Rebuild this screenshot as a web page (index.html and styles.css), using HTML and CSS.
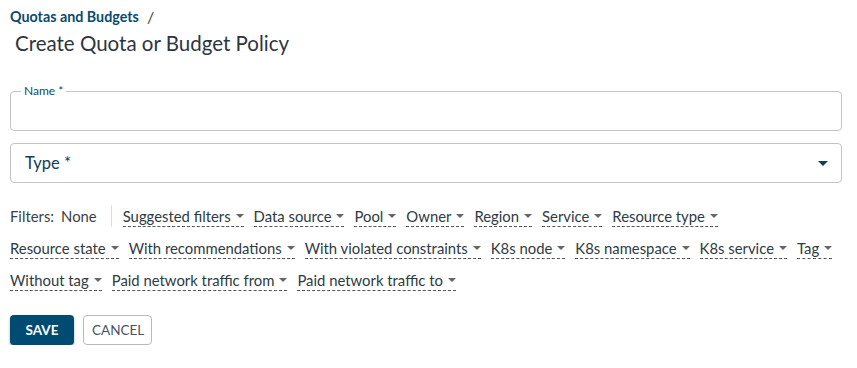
FILE: index.html
```html
<!DOCTYPE html>
<html>
<head>
<meta charset="utf-8">
<link rel="stylesheet" href="styles.css">
</head>
<body>
<div class="page">
  <div class="breadcrumbs"><a class="crumb">Quotas and Budgets</a><span class="sep">/</span></div>
  <h1 class="title">Create Quota or Budget Policy</h1>

  <fieldset class="field name-field">
    <legend>Name *</legend>
  </fieldset>

  <div class="field select-field">
    <span class="select-label">Type *</span>
    <svg class="select-arrow" width="10" height="5" viewBox="0 0 10 5"><path d="M0 0h10L5 5z" fill="#0b3f5f"/></svg>
  </div>

  <div class="filters">
    <div class="filters-head"><span>Filters:</span><span>None</span></div>
    <div class="divider"></div>
    <span class="filter">Suggested filters<i class="caret"></i></span>
    <span class="filter">Data source<i class="caret"></i></span>
    <span class="filter">Pool<i class="caret"></i></span>
    <span class="filter">Owner<i class="caret"></i></span>
    <span class="filter">Region<i class="caret"></i></span>
    <span class="filter">Service<i class="caret"></i></span>
    <span class="filter">Resource type<i class="caret"></i></span>
    <span class="row-break"></span>
    <span class="filter">Resource state<i class="caret"></i></span>
    <span class="filter">With recommendations<i class="caret"></i></span>
    <span class="filter">With violated constraints<i class="caret"></i></span>
    <span class="filter">K8s node<i class="caret"></i></span>
    <span class="filter">K8s namespace<i class="caret"></i></span>
    <span class="filter">K8s service<i class="caret"></i></span>
    <span class="filter">Tag<i class="caret"></i></span>
    <span class="row-break"></span>
    <span class="filter">Without tag<i class="caret"></i></span>
    <span class="filter">Paid network traffic from<i class="caret"></i></span>
    <span class="filter">Paid network traffic to<i class="caret"></i></span>
  </div>

  <div class="actions">
    <button class="btn btn-primary">SAVE</button>
    <button class="btn btn-outline">CANCEL</button>
  </div>
</div>
</body>
</html>
```

FILE: styles.css
```css
* { box-sizing: border-box; }
html, body { margin: 0; padding: 0; background: #fff; }
body { font-family: Lato, "Noto Sans", sans-serif; color: #333; }
.page { padding: 6px 15px 0 10px; }

.breadcrumbs { display: flex; align-items: center; gap: 8px; height: 20px; }
.crumb { font-size: 14.3px; font-weight: 700; color: #0b4a6e; }
.sep { font-size: 16px; color: #444; }

.title { margin: 3px 0 0 5px; font-size: 20.5px; font-weight: 400; color: #2d3540; height: 28px; line-height: 28px; }

.field { border: 1px solid #c4c4c4; border-radius: 4px; width: 100%; }
.name-field { margin: 28px 0 0 0; padding: 0 10px; height: 46px; min-width: 0; }
.name-field legend { font-size: 12px; color: #0b4a6e; padding: 0 3px; margin-left: 0; line-height: 12px; }

.select-field { margin-top: 12px; height: 40px; display: flex; align-items: center; justify-content: space-between; padding: 0 13px 0 14px; }
.select-label { font-size: 16.5px; color: #0f3d5a; }

.filters { margin-top: 17px; display: flex; flex-wrap: wrap; align-items: center; column-gap: 10px; font-size: 14.85px; }
.filters > * { margin: 5px 0; }
.filters > .row-break { flex-basis: 100%; height: 0; margin: 0; }
.filters-head { display: flex; gap: 7px; color: #3a3f45; height: 22px; align-items: center; margin-right: 4px; }
.divider { width: 1px; height: 22px; background: #ddd; margin-right: 1px; }
.filter { display: inline-flex; align-items: center; height: 22px; border-bottom: 1px dashed #555; color: #2e3a45; white-space: nowrap; }
.caret { display: inline-block; width: 0; height: 0; border-left: 4px solid transparent; border-right: 4px solid transparent; border-top: 4px solid #666; margin-left: 5px; }

.actions { margin-top: 19px; display: flex; gap: 9px; }
.btn { font-family: inherit; font-size: 13.5px; height: 30px; border-radius: 4px; padding: 0 8px; cursor: pointer; }
.btn-primary { background: #004b71; color: #fff; border: none; font-weight: 700; width: 64px; box-shadow: 0 2px 3px rgba(0,0,0,0.3); }
.btn-outline { background: #fff; color: #4a5466; border: 1px solid #b4b9c6; width: 69px; }
```
